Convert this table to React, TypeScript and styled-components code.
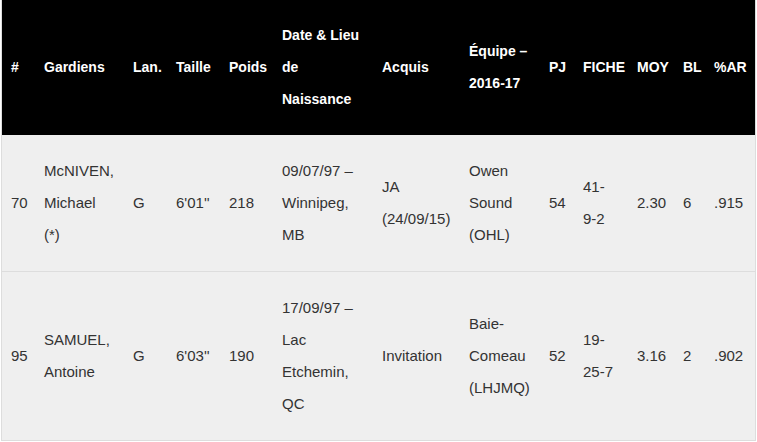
import styled, { createGlobalStyle } from 'styled-components';

const GlobalStyle = createGlobalStyle`
  html, body {
    margin: 0;
    padding: 0;
    background: #ffffff;
  }
`;

type Column = { label: string; width: number };

const columns: Column[] = [
  { label: '#', width: 33 },
  { label: 'Gardiens', width: 89 },
  { label: 'Lan.', width: 43 },
  { label: 'Taille', width: 53 },
  { label: 'Poids', width: 53 },
  { label: 'Date & Lieu de Naissance', width: 100 },
  { label: 'Acquis', width: 87 },
  { label: 'Équipe – 2016-17', width: 80 },
  { label: 'PJ', width: 34 },
  { label: 'FICHE', width: 54 },
  { label: 'MOY', width: 46 },
  { label: 'BL', width: 31 },
  { label: '%AR', width: 50 },
];

// word joiner keeps "9-2" together so the record wraps after "41-"
const goalies: string[][] = [
  ['70', 'McNIVEN, Michael (*)', 'G', "6'01''", '218', '09/07/97 – Winnipeg, MB', 'JA (24/09/15)', 'Owen Sound (OHL)', '54', '41-9-\u20602', '2.30', '6', '.915'],
  ['95', 'SAMUEL, Antoine', 'G', "6'03''", '190', '17/09/97 – Lac Etchemin, QC', 'Invitation', 'Baie-Comeau (LHJMQ)', '52', '19-25-\u20607', '3.16', '2', '.902'],
];

export default function App() {
  return (
    <>
      <GlobalStyle />
      <Wrapper>
        <StatsTable>
          <colgroup>
            {columns.map((c) => (
              <col key={c.label} style={{ width: c.width }} />
            ))}
          </colgroup>
          <thead>
            <tr>
              {columns.map((c) => (
                <HeadCell key={c.label}>{c.label}</HeadCell>
              ))}
            </tr>
          </thead>
          <tbody>
            {goalies.map((row) => (
              <Row key={row[0]}>
                {row.map((value, i) => (
                  <Cell key={i}>{value}</Cell>
                ))}
              </Row>
            ))}
          </tbody>
        </StatsTable>
      </Wrapper>
    </>
  );
}

const Wrapper = styled.div`
  padding-left: 1px;
`;

const StatsTable = styled.table`
  width: 755px;
  table-layout: fixed;
  border-collapse: separate;
  border-spacing: 0;
  border: 1px solid #dddddd;
  border-top: 0;
  font-family: 'Liberation Sans', Arial, sans-serif;
`;

const HeadCell = styled.th`
  background: #000000;
  color: #ffffff;
  font-size: 14px;
  font-weight: 700;
  line-height: 32px;
  text-align: left;
  vertical-align: middle;
  padding: 19px 7px 20px 9px;
`;

const Row = styled.tr`
  & + & td {
    border-top: 1px solid #dddddd;
  }
`;

const Cell = styled.td`
  background: #efefef;
  color: #333333;
  font-size: 15px;
  line-height: 32px;
  text-align: left;
  vertical-align: middle;
  padding: 20px 9px 20px 9px;
`;
